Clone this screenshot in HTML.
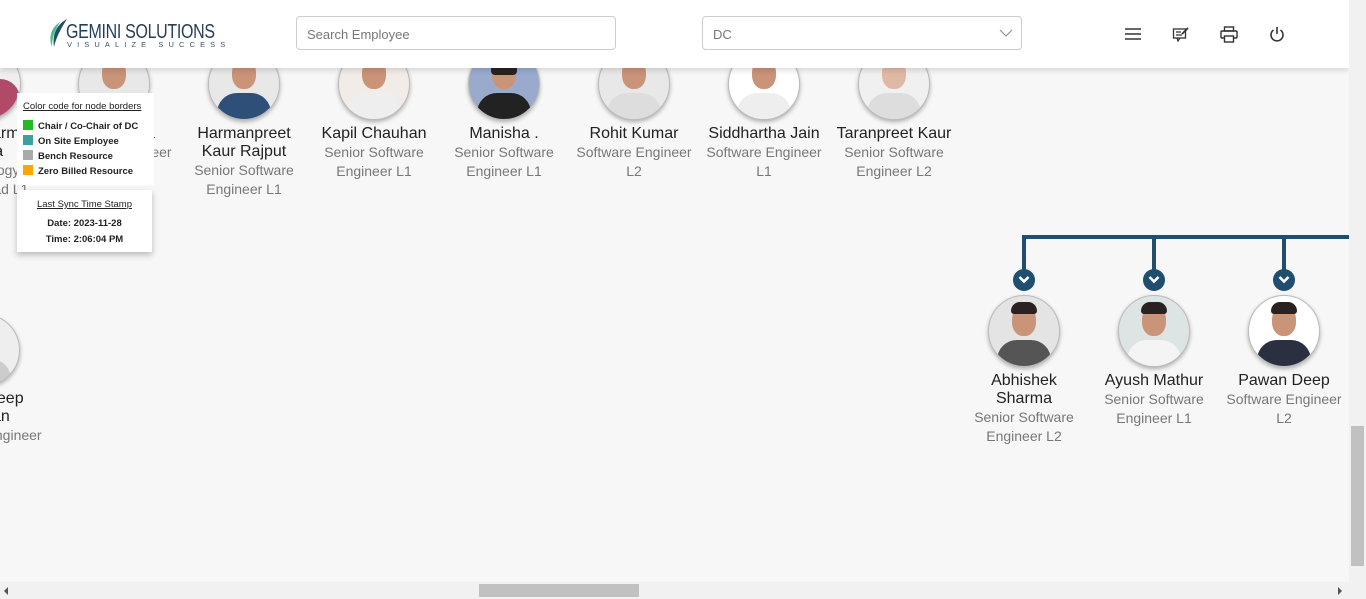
<!DOCTYPE html>
<html><head><style>
html,body{margin:0;width:1366px;height:599px;overflow:hidden}
body{background:#f7f7f7;font-family:"Liberation Sans",sans-serif;position:relative}
.wrap{position:absolute;left:0;top:0;width:1366px;height:599px;overflow:hidden}
.hdr{position:absolute;left:0;top:0;width:1349px;height:68px;background:#fff;box-shadow:0 2px 6px rgba(0,0,0,.15);z-index:5}
.inp{position:absolute;top:16px;height:34px;border:1px solid #ccc;border-radius:4px;box-sizing:border-box;font-size:13px;color:#777;padding:10px 10px;background:#fff}
.av{position:absolute;width:70px;height:70px;border-radius:50%;border:1px solid #bbb;box-shadow:0 2px 4px rgba(0,0,0,.3);overflow:hidden;background:#e8e8e8}
.av .h{position:absolute;left:23px;top:10px;width:24px;height:30px;border-radius:45%;background:#c99478}
.av .hr{position:absolute;left:22px;top:6px;width:26px;height:12px;border-radius:12px 12px 4px 4px;background:#2a2220}
.av .b{position:absolute;left:8px;top:44px;width:54px;height:40px;border-radius:20px 20px 0 0;background:#3a4a60}
.n{position:absolute;width:130px;text-align:center;font-size:16px;color:#222;line-height:18px;white-space:nowrap}
.s{font-size:14px;color:#777;line-height:18px}
.vl{position:absolute;width:4px;background:#1f4e6e}
.ch{position:absolute;width:22px;height:22px;border-radius:50%;background:#1f4e6e}
.ch svg{position:absolute;left:5px;top:6px}
</style></head><body><div class="wrap">
<div class="hdr">
 <svg style="position:absolute;left:47px;top:18px" width="22" height="30" viewBox="0 0 22 30"><path d="M20 1C11 6 5 14 7 29C9 20 13 12 20 1Z" fill="#1f4e6e"/><path d="M13 4C5 9 1 18 5 29C5 20 8 12 13 4Z" fill="#4dbf8a"/></svg>
 <div style="position:absolute;left:66px;top:21px;font-size:20px;color:#2a3f55;letter-spacing:-.4px;line-height:22px;transform:scaleX(.8);transform-origin:0 0;white-space:nowrap"><span style="color:#1f3f5c">GEMINI</span> SOLUTIONS</div>
 <div style="position:absolute;left:67px;top:40px;font-size:7.5px;color:#3a4f65;letter-spacing:5.1px;white-space:nowrap">VISUALIZE SUCCESS</div>
 <div class="inp" style="left:296px;width:320px">Search Employee</div>
 <div class="inp" style="left:702px;width:320px">DC<svg style="position:absolute;right:8px;top:12px" width="14" height="9"><path d="M1 1L7 7L13 1" stroke="#888" fill="none"/></svg></div>
 <svg style="position:absolute;left:1124px;top:27px" width="18" height="14"><path d="M1 2H17M1 7H17M1 12H17" stroke="#333" stroke-width="1.6"/></svg>
 <svg style="position:absolute;left:1172px;top:26px" width="18" height="18"><rect x="1.5" y="3" width="12" height="9" fill="none" stroke="#333" stroke-width="1.3"/><path d="M5 12L6 15L8 12M4 6H9M4 9H10" stroke="#333" stroke-width="1.2" fill="none"/><path d="M10 8L16 2" stroke="#333" stroke-width="1.8"/></svg>
 <svg style="position:absolute;left:1220px;top:26px" width="18" height="17"><rect x="4.5" y="1" width="9" height="4" fill="none" stroke="#333" stroke-width="1.4"/><rect x="1" y="5" width="16" height="7" rx="1" fill="none" stroke="#333" stroke-width="1.4"/><rect x="4.5" y="10" width="9" height="6" fill="#fff" stroke="#333" stroke-width="1.4"/></svg>
 <svg style="position:absolute;left:1269px;top:26px" width="16" height="17"><path d="M8 1V8" stroke="#333" stroke-width="1.6"/><path d="M4.5 4A6 6 0 1 0 11.5 4" stroke="#333" stroke-width="1.6" fill="none"/></svg>
</div>

<div class="av" style="left:-51px;top:48px;background:#eee"><div class="b" style="background:#b04a66;left:0;width:70px;top:30px"></div></div>
<div class="av" style="left:78px;top:48px"><div class="h"></div><div class="hr"></div><div class="b"></div></div>
<div class="av" style="left:208px;top:48px"><div class="h"></div><div class="hr"></div><div class="b" style="background:#2e4f78"></div></div>
<div class="av" style="left:338px;top:48px;background:#f2ece8"><div class="h"></div><div class="hr"></div><div class="b" style="background:#eee"></div></div>
<div class="av" style="left:468px;top:48px;background:#9ac"><div class="h"></div><div class="hr" style="height:20px"></div><div class="b" style="background:#222"></div></div>
<div class="av" style="left:598px;top:48px"><div class="h"></div><div class="hr"></div><div class="b" style="background:#ddd"></div></div>
<div class="av" style="left:728px;top:48px;background:#fff"><div class="h"></div><div class="hr"></div><div class="b" style="background:#eee"></div></div>
<div class="av" style="left:858px;top:48px;background:#f0f0f0"><div class="h" style="background:#e0b9a5"></div><div class="hr" style="background:#5a4030"></div><div class="b" style="background:#ddd"></div></div>

<div class="n" style="left:-81px;top:125px">Ritu Sharma<br>Batra<br><span class="s">Technology<br>Team Lead L1</span></div>
<div class="n" style="left:49px;top:125px">Nikhil Arora<br><span class="s">Software Engineer</span></div>
<div class="n" style="left:179px;top:125px">Harmanpreet<br>Kaur Rajput<br><span class="s">Senior Software<br>Engineer L1</span></div>
<div class="n" style="left:309px;top:125px">Kapil Chauhan<br><span class="s">Senior Software<br>Engineer L1</span></div>
<div class="n" style="left:439px;top:125px">Manisha .<br><span class="s">Senior Software<br>Engineer L1</span></div>
<div class="n" style="left:569px;top:125px">Rohit Kumar<br><span class="s">Software Engineer<br>L2</span></div>
<div class="n" style="left:699px;top:125px">Siddhartha Jain<br><span class="s">Software Engineer<br>L1</span></div>
<div class="n" style="left:829px;top:125px">Taranpreet Kaur<br><span class="s">Senior Software<br>Engineer L2</span></div>

<div style="position:absolute;left:17px;top:93px;width:137px;height:92px;background:#fff;font-size:9.5px;font-weight:bold;color:#222;z-index:3">
 <div style="position:absolute;left:6px;top:8px;font-weight:normal;text-decoration:underline">Color code for node borders</div>
 <div style="position:absolute;left:6px;top:27px;width:10px;height:10px;background:#22bb22"></div><div style="position:absolute;left:21px;top:28px">Chair / Co-Chair of DC</div>
 <div style="position:absolute;left:6px;top:42px;width:10px;height:10px;background:#3aa0a0"></div><div style="position:absolute;left:21px;top:43px">On Site Employee</div>
 <div style="position:absolute;left:6px;top:57px;width:10px;height:10px;background:#aaa"></div><div style="position:absolute;left:21px;top:58px">Bench Resource</div>
 <div style="position:absolute;left:6px;top:72px;width:10px;height:10px;background:#ffa500"></div><div style="position:absolute;left:21px;top:73px">Zero Billed Resource</div>
</div>
<div style="position:absolute;left:17px;top:190px;width:135px;height:62px;background:#fff;box-shadow:0 3px 6px rgba(0,0,0,.25);font-size:9.5px;text-align:center;color:#222;z-index:3">
 <div style="margin-top:9px;text-decoration:underline">Last Sync Time Stamp</div>
 <div style="margin-top:8px;font-weight:bold">Date: 2023-11-28</div>
 <div style="margin-top:5px;font-weight:bold">Time: 2:06:04 PM</div>
</div>

<div class="av" style="left:-52px;top:314px;background:#eee"><div class="h"></div><div class="hr"></div><div class="b" style="background:#ccc"></div></div>
<div class="n" style="left:-81px;top:390px">Jagandeep<br>Raman<br><span class="s">Software Engineer</span></div>

<div style="position:absolute;left:1022px;top:235px;width:327px;height:4px;background:#1f4e6e"></div>
<div class="vl" style="left:1022px;top:235px;height:36px"></div>
<div class="vl" style="left:1152px;top:235px;height:36px"></div>
<div class="vl" style="left:1282px;top:235px;height:36px"></div>
<div class="ch" style="left:1013px;top:269px"><svg width="12" height="10"><path d="M1.5 2L6 6.5L10.5 2" stroke="#fff" stroke-width="2.6" fill="none"/></svg></div>
<div class="ch" style="left:1143px;top:269px"><svg width="12" height="10"><path d="M1.5 2L6 6.5L10.5 2" stroke="#fff" stroke-width="2.6" fill="none"/></svg></div>
<div class="ch" style="left:1273px;top:269px"><svg width="12" height="10"><path d="M1.5 2L6 6.5L10.5 2" stroke="#fff" stroke-width="2.6" fill="none"/></svg></div>

<div class="av" style="left:988px;top:295px;background:#e4e4e4"><div class="h"></div><div class="hr"></div><div class="b" style="background:#555"></div></div>
<div class="av" style="left:1118px;top:295px;background:#dde4e4"><div class="h"></div><div class="hr"></div><div class="b" style="background:#f4f4f4"></div></div>
<div class="av" style="left:1248px;top:295px;background:#fff"><div class="h"></div><div class="hr"></div><div class="b" style="background:#2a3040"></div></div>
<div class="n" style="left:959px;top:372px">Abhishek<br>Sharma<br><span class="s">Senior Software<br>Engineer L2</span></div>
<div class="n" style="left:1089px;top:372px">Ayush Mathur<br><span class="s">Senior Software<br>Engineer L1</span></div>
<div class="n" style="left:1219px;top:372px">Pawan Deep<br><span class="s">Software Engineer<br>L2</span></div>

<div style="position:absolute;left:1349px;top:0;width:17px;height:582px;background:#f1f1f1;z-index:6"><div style="position:absolute;left:2px;top:426px;width:13px;height:140px;background:#c1c1c1"></div></div>
<div style="position:absolute;left:0;top:582px;width:1366px;height:17px;background:#f1f1f1;z-index:6">
 <div style="position:absolute;left:479px;top:2px;width:160px;height:13px;background:#c1c1c1"></div>
 <div style="position:absolute;left:4px;top:5px;width:0;height:0;border-top:4px solid transparent;border-bottom:4px solid transparent;border-right:4px solid #555"></div>
 <div style="position:absolute;left:1338px;top:5px;width:0;height:0;border-top:4px solid transparent;border-bottom:4px solid transparent;border-left:4px solid #555"></div>
</div>
</div></body></html>
